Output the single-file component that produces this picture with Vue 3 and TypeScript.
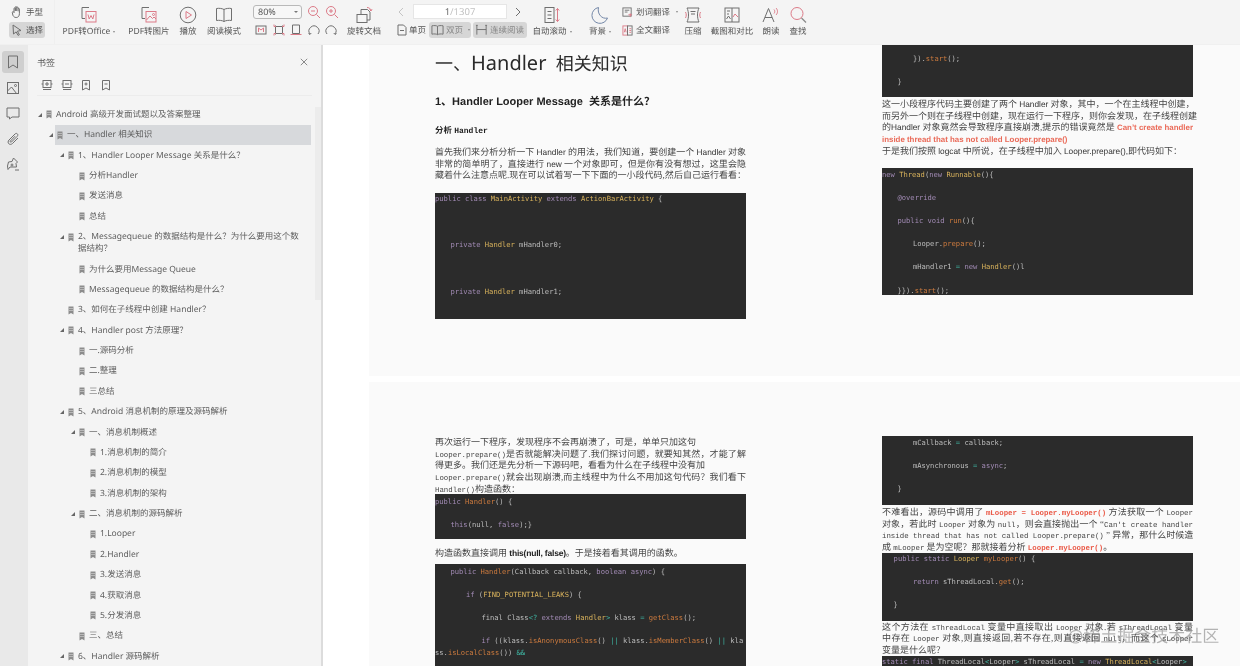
<template>
  <div class="reader">
    <header class="toolbar">
      <div class="hand-group">
        <div class="mode-row">
          <svg class="ico14" viewBox="0 0 14 14"><path d="M4 7V3.600c0-1 1.300-1 1.300 0V6m0-.5V2.300c0-1 1.400-1 1.400 0V6m0-3.200c0-1 1.400-1 1.400 0V6.300m0-2.200c0-1 1.300-1 1.300 0v4.600c0 2.300-1.200 3.800-3.200 3.800-1.700 0-2.500-.8-3.300-2.200L2.400 7.800c-.5-1 .7-1.700 1.300-.8L4.400 8" class="ln" /></svg>
          <span>手型</span>
        </div>
        <div class="mode-row on">
          <svg class="ico14" viewBox="0 0 14 14"><path d="M3 2l8 5.500-3.600.7 2 3.500-1.300.7-2-3.500L3.500 11z" class="ln" /></svg>
          <span>选择</span>
        </div>
      </div>

      <div class="tool w-office">
        <svg class="ico20" viewBox="0 0 20 20"><path d="M10 2.500H3v11h3" class="ln" /><rect x="7" y="6.500" width="10" height="10.500" class="ln-red" /><path d="M9 9.500l1.200 4.500 1.800-3.500 1.800 3.500L15 9.500" class="ln-red" /></svg>
        <span class="tool-label">PDF转Office<i class="dot"></i></span>
      </div>
      <div class="tool w-image">
        <svg class="ico20" viewBox="0 0 20 20"><path d="M10 2.500H3v11h3" class="ln" /><rect x="7" y="6.500" width="10" height="10.500" class="ln-red" /><path d="M7.500 15l3.500-4 2.500 2.500 1.500-1.500 2 2" class="ln-red" /><circle cx="14.500" cy="9.500" r="1" class="ln-red" /></svg>
        <span class="tool-label">PDF转图片</span>
      </div>
      <div class="tool w-play">
        <svg class="ico20" viewBox="0 0 20 20"><circle cx="10" cy="10" r="7.800" class="ln" /><path d="M8 6.500l5.500 3.500L8 13.500z" class="ln-red" /></svg>
        <span class="tool-label">播放</span>
      </div>
      <div class="tool w-read">
        <svg class="ico20" viewBox="0 0 20 20"><path d="M10 4.500C8.500 3.500 5 3 2.500 3.500v12c2.500-.5 6 0 7.500 1 1.500-1 5-1.500 7.500-1v-12C15 3 11.500 3.500 10 4.500zm0 0v12" class="ln" /></svg>
        <span class="tool-label">阅读模式</span>
      </div>

      <div class="zoom-group">
        <div class="zoom-row">
          <div class="zoom-select">80%<i class="caret"></i></div>
          <svg class="ico14 first" viewBox="0 0 14 14"><circle cx="6" cy="6" r="4.500" class="ln-red" /><path d="M4 6h4M9.500 9.500L13 13" class="ln-red" /></svg>
          <svg class="ico14" viewBox="0 0 14 14"><circle cx="6" cy="6" r="4.500" class="ln-red" /><path d="M4 6h4M6 4v4M9.500 9.500L13 13" class="ln-red" /></svg>
        </div>
        <div class="fit-row">
          <svg class="ico14" viewBox="0 0 14 14"><rect x="2" y="3" width="10" height="8" class="ln" /><path d="M4.500 9V5l2.500 2 2.500-2v4" class="ln-red" /></svg>
          <svg class="ico14" viewBox="0 0 14 14"><path d="M3.500 2.500v9M10.500 2.500v9M2 3.500h10M2 10.500h10" class="ln" /><path d="M2 1.500v2h2M12 1.500v2h-2M2 12.500v-2h2M12 12.500v-2h-2" class="ln-red" /></svg>
          <svg class="ico14" viewBox="0 0 14 14"><path d="M3.500 2h7v8.500h-7z" class="ln" /><path d="M1.500 11.500h11" class="ln-red" /></svg>
          <svg class="ico14" viewBox="0 0 14 14"><path d="M3 11A5 5 0 1 1 11 11" class="ln" /><path d="M1.500 10.500L3 11.500l1.200-1.500" class="ln" /></svg>
          <svg class="ico14" viewBox="0 0 14 14"><path d="M11 11A5 5 0 1 0 3 11" class="ln" /><path d="M12.500 10.500L11 11.500 9.800 10" class="ln" /></svg>
        </div>
      </div>

      <div class="tool w-rotate">
        <svg class="ico20" viewBox="0 0 20 20"><path d="M7 9.500V4.500h6.500l2.500 2.500v8h-3" class="ln" /><rect x="3" y="9.500" width="10" height="8" class="ln" /><path d="M13 2.500c2 0 3.500 1 4 3M15.500 4.500l1.500 1.500 1-1.800" class="ln-red" /></svg>
        <span class="tool-label">旋转文档</span>
      </div>

      <div class="nav-group">
        <div class="nav-row">
          <svg class="chev" viewBox="0 0 10 14"><path d="M7 3L3 7l4 4" class="ln-pale" /></svg>
          <div class="page-input"><b>1</b>/1307</div>
          <svg class="chev" viewBox="0 0 10 14"><path d="M3 3l4 4-4 4" class="ln" /></svg>
        </div>
        <div class="view-row">
          <div class="view-btn single">
            <svg class="ico10" viewBox="0 0 10 12"><path d="M1 1h5.500L9 3.500V11H1zM3 6.500h4" class="ln" /></svg>
            <span>单页</span>
          </div>
          <div class="view-btn on double">
            <svg class="ico13" viewBox="0 0 14 12"><path d="M7 2C6 1.200 3 1 1 1.500v9c2-.5 5-.3 6 .5 1-.8 4-1 6-.5v-9C11 1 8 1.200 7 2zm0 0v9" class="ln" /></svg>
            <span>双页</span><i class="dot"></i>
          </div>
          <div class="view-btn on">
            <svg class="ico13" viewBox="0 0 14 12"><path d="M2 1v10M12 1v10M2 5.500h10M1 1h2M11 1h2" class="ln" /></svg>
            <span>连续阅读</span>
          </div>
        </div>
      </div>

      <div class="tool w-auto">
        <svg class="ico20" viewBox="0 0 20 20"><rect x="3" y="2.500" width="9" height="15" class="ln" /><path d="M5.500 6.500h4M5.500 10h4M5.500 13.500h4" class="ln" /><path d="M15.500 3.500v13M13.800 5.500l1.700-2 1.700 2M13.800 14.500l1.700 2 1.700-2" class="ln-red" /></svg>
        <span class="tool-label">自动滚动<i class="dot"></i></span>
      </div>
      <div class="tool w-theme">
        <svg class="ico20" viewBox="0 0 20 20"><path d="M8.500 2.500a8 8 0 1 0 9 10.500c-5.500 1.500-10.500-4-9-10.500z" class="ln-blue" /></svg>
        <span class="tool-label">背景<i class="dot"></i></span>
      </div>
      <div class="translate-group">
        <div class="translate-row">
          <svg class="ico11" viewBox="0 0 12 12"><rect x="1" y="1" width="9" height="9" class="ln" /><path d="M3 3.500h5M3 5.500h3" class="ln" /><path d="M7 8.500h4M9 7v4" class="ln-red" /></svg>
          <span>划词翻译</span><i class="dot"></i>
        </div>
        <div class="translate-row">
          <svg class="ico11" viewBox="0 0 12 12"><rect x="1" y="1" width="5" height="10" class="ln-red" /><rect x="6" y="1" width="5" height="10" class="ln" /><path d="M2.500 8l1-4 1 4M8 4h2M8 6h2M8 8h2" class="ln-red" /></svg>
          <span>全文翻译</span>
        </div>
      </div>
      <div class="tool w-small">
        <svg class="ico20" viewBox="0 0 20 20"><path d="M4 3h12c-2 4-2 10 0 14H4c2-4 2-10 0-14zM7.500 6.500h5M8 9h4" class="ln" /><path d="M2.500 7c1 2 1 4 0 6M17.500 7c-1 2-1 4 0 6" class="ln-red" /></svg>
        <span class="tool-label">压缩</span>
      </div>
      <div class="tool w-shot">
        <svg class="ico20" viewBox="0 0 20 20"><rect x="3" y="3" width="14" height="14" class="ln" /><path d="M10 3v14" class="ln" /><path d="M5 6h3M5 9h2M4.500 14l2-3 2 3" class="ln" /><path d="M11 12l2-3 3 3" class="ln-red" /></svg>
        <span class="tool-label">截图和对比</span>
      </div>
      <div class="tool w-small">
        <svg class="ico20" viewBox="0 0 20 20"><path d="M2 17L7.500 3.500 13 17M4 12.500h7" class="ln" /><path d="M13 4.500c1 1 1 3 0 4M15 3c2 2 2 5 0 7" class="ln-red" /></svg>
        <span class="tool-label">朗读</span>
      </div>
      <div class="tool w-find">
        <svg class="ico20" viewBox="0 0 20 20"><circle cx="9" cy="8.500" r="6" class="ln-red" /><path d="M13.500 13l4.500 4.500" class="ln-gray" /></svg>
        <span class="tool-label">查找</span>
      </div>
    </header>

    <div class="workspace">
      <nav class="rail">
        <div class="rail-btn on">
          <svg class="ico16" viewBox="0 0 16 16"><path d="M3.500 2h9v12L8 11l-4.500 3z" class="ln" /></svg>
        </div>
        <div class="rail-btn">
          <svg class="ico16" viewBox="0 0 16 16"><rect x="2.500" y="2.500" width="11" height="11" class="ln" /><circle cx="10.500" cy="5.500" r="1" class="ln" /><path d="M2.500 11l4-4 5 6.500" class="ln" /></svg>
        </div>
        <div class="rail-btn">
          <svg class="ico16" viewBox="0 0 16 16"><path d="M2 3h12v9H7l-2.500 2v-2H2z" class="ln" /></svg>
        </div>
        <div class="rail-btn">
          <svg class="ico16" viewBox="0 0 16 16"><path d="M13 7l-5.500 5.500c-2.800 2.500-6-.8-3.500-3.500l6-6c1.700-1.600 3.800.5 2.300 2.200L6.500 11c-.8.700-1.800-.2-1.100-1L10 5.200" class="ln" /></svg>
        </div>
        <div class="rail-btn">
          <svg class="ico16" viewBox="0 0 16 16"><path d="M8.500 2l4 4-1.500 1.500.5 3.500H5L3 13.500 2.500 10 3.500 6l3.500-.5z" class="ln" /><circle cx="7" cy="9" r="1" class="ln" /><path d="M10 14h4" class="ln" /></svg>
        </div>
      </nav>

      <aside class="bookmarks">
        <div class="bm-head">
          <span>书签</span>
          <svg class="close" viewBox="0 0 10 10"><path d="M1 1l8 8M9 1L1 9" class="ln" /></svg>
        </div>
        <div class="bm-tools">
          <svg class="ico12" viewBox="0 0 12 12"><rect x="2" y="1.500" width="8" height="7" class="ln" /><path d="M4 5h4M6 3v4M.5 5H2M10 5h1.500M2 10.500h8" class="ln" /></svg>
          <svg class="ico12" viewBox="0 0 12 12"><rect x="2" y="1.500" width="8" height="7" class="ln" /><path d="M4 5h4M.5 5H2M10 5h1.500M2 10.500h8" class="ln" /></svg>
          <svg class="ico12" viewBox="0 0 12 12"><path d="M2.500 1.500h7v9.500L6 9l-3.500 2zM4.500 5h3M6 3.500v3" class="ln" /></svg>
          <svg class="ico12" viewBox="0 0 12 12"><path d="M2.500 1.500h7v9.500L6 9l-3.500 2zM4.500 5h3" class="ln" /></svg>
        </div>
        <div class="bm-tree">
          <div
            v-for="(row, i) in bookmarks"
            :key="i"
            class="bm-row"
            :style="{ paddingLeft: row.level * 11 + 'px' }"
          >
            <span class="bm-arrow"><i v-if="row.open"></i></span>
            <div class="bm-body" :class="{ active: row.active }">
              <svg class="bm-flag" viewBox="0 0 6 9"><path d="M.5.500h5v8L3 7 .5 8.500z" /><path d="M1 2.500h4M1 4.500h4" class="flag-cut" /></svg>
              <span class="bm-text">{{ row.label }}</span>
            </div>
          </div>
        </div>
        <div class="bm-scroll"></div>
      </aside>

      <main class="viewer">
        <section v-for="(spread, s) in spreads" :key="s" class="spread" :class="'spread-' + s">
          <div v-for="(col, c) in spread" :key="c" class="column">
            <template v-for="(block, b) in col" :key="b">
              <pre
                v-if="block.kind === 'code'"
                class="code"
                :style="{ marginTop: block.top + 'px', height: block.height + 'px', paddingTop: (block.pad || 0) + 'px' }"
              ><div v-for="(line, l) in block.lines" :key="l" class="code-line" :style="{ paddingLeft: indent(line) + 'px' }"><span v-for="(seg, g) in parse(line.trimStart())" :key="g" :class="'t-' + seg.kind">{{ seg.text }}</span></div></pre>
              <div v-else :class="block.kind" :style="{ marginTop: block.top + 'px' }">
                <div
                  v-for="(line, l) in block.lines"
                  :key="l"
                  class="doc-line"
                  :class="{ just: line.endsWith('>>') }"
                ><span v-for="(seg, g) in parse(line.replace('>>', ''))" :key="g" :class="'t-' + seg.kind">{{ seg.text }}</span></div>
              </div>
            </template>
          </div>
        </section>
      </main>
    </div>

    <div class="watermark">@稀土掘金技术社区</div>
  </div>
</template>

<script setup lang="ts">
interface Bookmark {
  level: number
  label: string
  open?: boolean
  active?: boolean
}

interface Block {
  kind: 'h1' | 'h2' | 'h3' | 'text' | 'code'
  top: number
  lines: string[]
  height?: number
  pad?: number
}

const bookmarks: Bookmark[] = [
  { level: 0, label: 'Android 高级开发面试题以及答案整理', open: true },
  { level: 1, label: '一、Handler 相关知识', open: true, active: true },
  { level: 2, label: '1、Handler Looper Message 关系是什么？', open: true },
  { level: 3, label: '分析Handler' },
  { level: 3, label: '发送消息' },
  { level: 3, label: '总结' },
  { level: 2, label: '2、Messagequeue 的数据结构是什么？为什么要用这个数\n据结构？', open: true },
  { level: 3, label: '为什么要用Message Queue' },
  { level: 3, label: 'Messagequeue 的数据结构是什么？' },
  { level: 2, label: '3、如何在子线程中创建 Handler？' },
  { level: 2, label: '4、Handler post 方法原理？', open: true },
  { level: 3, label: '一.源码分析' },
  { level: 3, label: '二.整理' },
  { level: 3, label: '三总结' },
  { level: 2, label: '5、Android 消息机制的原理及源码解析', open: true },
  { level: 3, label: '一、消息机制概述', open: true },
  { level: 4, label: '1.消息机制的简介' },
  { level: 4, label: '2.消息机制的模型' },
  { level: 4, label: '3.消息机制的架构' },
  { level: 3, label: '二、消息机制的源码解析', open: true },
  { level: 4, label: '1.Looper' },
  { level: 4, label: '2.Handler' },
  { level: 4, label: '3.发送消息' },
  { level: 4, label: '4.获取消息' },
  { level: 4, label: '5.分发消息' },
  { level: 3, label: '三、总结' },
  { level: 2, label: '6、Handler 源码解析', open: true },
]

// [k|..] keyword, [c|..] class, [o|..] method, [p|..] operator
// [s|..] sans latin, [m|..] mono latin, [r|..] red sans, [q|..] red mono, [b|..] bold, [l|..] big latin
const spreads: Block[][][] = [
  [
    [
      { kind: 'h1', top: 4, lines: ['一、[l|Handler]  相关知识'] },
      { kind: 'h2', top: 17, lines: ['1、Handler Looper Message  关系是什么？'] },
      { kind: 'h3', top: 14, lines: ['分析 [m|Handler]'] },
      {
        kind: 'text',
        top: 10,
        lines: [
          '首先我们来分析分析一下 [s|Handler] 的用法，我们知道，要创建一个 [s|Handler] 对象>>',
          '非常的简单明了，直接进行 [s|new] 一个对象即可，但是你有没有想过，这里会隐>>',
          '藏着什么注意点呢.现在可以试着写一下下面的一小段代码,然后自己运行看看：>>',
        ],
      },
      {
        kind: 'code',
        top: 11.700,
        height: 126,
        lines: [
          '[k|public class] [c|MainActivity] [k|extends] [c|ActionBarActivity] {',
          '',
          '',
          '',
          '    [k|private] [c|Handler] mHandler0;',
          '',
          '',
          '',
          '    [k|private] [c|Handler] mHandler1;',
        ],
      },
    ],
    [
      {
        kind: 'code',
        top: 0,
        height: 52,
        pad: 8,
        lines: ['        }).[o|start]();', '', '    }'],
      },
      {
        kind: 'text',
        top: 1,
        lines: [
          '这一小段程序代码主要创建了两个 [s|Handler] 对象，其中，一个在主线程中创建，>>',
          '而另外一个则在子线程中创建，现在运行一下程序，则你会发现，在子线程创建>>',
          '的[s|Handler] 对象竟然会导致程序直接崩溃,提示的错误竟然是 [r|Can’t create handler]>>',
          '[r|inside thread that has not called Looper.prepare()]',
          '于是我们按照 [s|logcat] 中所说，在子线程中加入 [s|Looper.prepare(),]即代码如下：',
        ],
      },
      {
        kind: 'code',
        top: 11.300,
        height: 127,
        pad: 1,
        lines: [
          '[k|new] [c|Thread]([k|new] [c|Runnable](){',
          '',
          '    [k|@override]',
          '',
          '    [k|public void] [o|run](){',
          '',
          '        Looper.[o|prepare]();',
          '',
          '        mHandler1 [p|=] [k|new] [c|Handler]()l',
          '',
          '    }}).[o|start]();',
        ],
      },
    ],
  ],
  [
    [
      {
        kind: 'text',
        top: 54,
        lines: [
          '再次运行一下程序，发现程序不会再崩溃了，可是，单单只加这句',
          '[m|Looper.prepare()]是否就能解决问题了.我们探讨问题，就要知其然，才能了解>>',
          '得更多。我们还是先分析一下源码吧，看看为什么在子线程中没有加',
          '[m|Looper.prepare()]就会出现崩溃,而主线程中为什么不用加这句代码？我们看下>>',
          '[m|Handler()]构造函数：',
        ],
      },
      {
        kind: 'code',
        top: 0,
        height: 45,
        pad: 1.500,
        lines: ['[k|public] [o|Handler]() {', '', '    [k|this](null, [k|false]);}'],
      },
      { kind: 'text', top: 7.500, lines: ['构造函数直接调用 [b|this(null, false)]。于是接着看其调用的函数。'] },
      {
        kind: 'code',
        top: 5,
        height: 110,
        pad: 2,
        lines: [
          '    [k|public] [o|Handler](Callback callback, [k|boolean async]) {',
          '',
          '        [k|if] ([c|FIND_POTENTIAL_LEAKS]) {',
          '',
          '            final Class[p|<?] [k|extends] [c|Handler][p|>] klass [p|=] [o|getClass]();',
          '',
          '            [k|if] ((klass.[o|isAnonymousClass]() [p|||] klass.[o|isMemberClass]() [p|||] kla',
          'ss.[o|isLocalClass]()) [p|&&]',
        ],
      },
    ],
    [
      {
        kind: 'code',
        top: 54,
        height: 69,
        pad: 1,
        lines: [
          '        mCallback [p|=] callback;',
          '',
          '        mAsynchronous [p|=] [k|async];',
          '',
          '    }',
        ],
      },
      {
        kind: 'text',
        top: 1,
        lines: [
          '不难看出，源码中调用了 [q|mLooper = Looper.myLooper()] 方法获取一个 [m|Looper]>>',
          '对象，若此时 [m|Looper] 对象为 [m|null]，则会直接抛出一个 “[m|Can\'t create handler]>>',
          '[m|inside thread that has not called Looper.prepare()] ” 异常，那什么时候造>>',
          '成 [m|mLooper] 是为空呢？那就接着分析 [q|Looper.myLooper()]。',
        ],
      },
      {
        kind: 'code',
        top: 0,
        height: 68,
        lines: [
          '   [k|public static] [c|Looper] [o|myLooper]() {',
          '',
          '        [k|return] sThreadLocal.[o|get]();',
          '',
          '   }',
        ],
      },
      {
        kind: 'text',
        top: 0,
        lines: [
          '这个方法在 [m|sThreadLocal] 变量中直接取出 [m|Looper] 对象.若 [m|sThreadLocal] 变量>>',
          '中存在 [m|Looper] 对象,则直接返回,若不存在,则直接返回 [m|null]，而这个 [m|sLooper]>>',
          '变量是什么呢？',
        ],
      },
      {
        kind: 'code',
        top: 0,
        height: 30,
        lines: ['[k|static final] ThreadLocal[p|<]Looper[p|>] sThreadLocal [p|=] [k|new] [c|ThreadLocal][p|<]Looper[p|>]'],
      },
    ],
  ],
]

interface Segment {
  kind: string
  text: string
}

const parse = (line: string): Segment[] => {
  const segs: Segment[] = []
  let last = 0
  for (const m of line.matchAll(/\[(\w)\|([^\]]*)\]/g)) {
    if (m.index > last) segs.push({ kind: 'x', text: line.slice(last, m.index) })
    segs.push({ kind: m[1], text: m[2] })
    last = m.index + m[0].length
  }
  if (last < line.length) segs.push({ kind: 'x', text: line.slice(last) })
  if (!segs.length) segs.push({ kind: 'x', text: ' ' })
  return segs
}

// the source code was indented a little narrower than one mono character
const indent = (line: string) => (line.length - line.trimStart().length) * 3.87
</script>

<style>
html,
body {
  margin: 0;
  background: #fff;
  overflow: hidden;
}
</style>

<style scoped>
.reader {
  position: relative;
  width: 1240px;
  height: 666px;
  overflow: hidden;
  background: #fff;
  filter: blur(0.45px);
  font-family: "Noto Sans", "Noto Sans CJK SC", sans-serif;
  font-size: 8.5px;
  color: #555;
  text-rendering: geometricPrecision;
}

/* icon strokes */
.ln,
.ln-red,
.ln-pale,
.ln-blue,
.ln-gray {
  fill: none;
  stroke: #6f6f6f;
  stroke-width: 1;
}
.ln-red {
  stroke: #dc7b88;
}
.ln-pale {
  stroke: #c4c4c4;
}
.ln-blue {
  stroke: #7488a8;
}
.ln-gray {
  stroke: #888;
  stroke-width: 1.2;
}
.ico10 {
  width: 10px;
  height: 12px;
  flex: none;
}
.ico11 {
  width: 11px;
  height: 11px;
  flex: none;
}
.ico12 {
  width: 12px;
  height: 12px;
  flex: none;
}
.ico13 {
  width: 13px;
  height: 12px;
  flex: none;
}
.ico14 {
  width: 14px;
  height: 14px;
  flex: none;
}
.ico16 {
  width: 16px;
  height: 16px;
}
.ico20 {
  width: 20px;
  height: 20px;
  flex: none;
}
.dot {
  display: inline-block;
  width: 0;
  height: 0;
  margin-left: 3px;
  border: 1.5px solid transparent;
  border-top: 2px solid #888;
  vertical-align: 0;
}

/* toolbar */
.toolbar {
  display: flex;
  height: 45px;
  box-sizing: border-box;
  background: #f4f4f4;
  border-bottom: 1px solid #f0f0f0;
}
.hand-group {
  width: 55px;
  flex: none;
  box-sizing: border-box;
  padding: 4px 0 0 9px;
  border-right: 1px solid #efefef;
}
.mode-row {
  display: flex;
  align-items: center;
  gap: 2px;
  width: 36px;
  height: 16px;
  padding-left: 1px;
  box-sizing: border-box;
  margin-bottom: 2px;
}
.mode-row.on {
  background: #d6d6d6;
  border-radius: 3px;
}
.tool {
  display: flex;
  flex-direction: column;
  align-items: center;
  flex: none;
  padding-top: 5px;
  box-sizing: border-box;
}
.tool-label {
  margin-top: 0.5px;
  line-height: 11px;
  white-space: nowrap;
}
.w-office {
  width: 68px;
}
.w-image {
  width: 52px;
}
.w-play {
  width: 26px;
}
.w-read {
  width: 46px;
}
.w-rotate {
  width: 38px;
}
.w-auto {
  width: 44px;
}
.w-theme {
  width: 44px;
  margin-left: 4px;
}
.w-small {
  width: 22px;
}
.w-shot {
  width: 56px;
}
.w-find {
  width: 32px;
}
.zoom-group {
  width: 98px;
  flex: none;
  box-sizing: border-box;
  padding: 5px 0 0 7px;
}
.zoom-row {
  display: flex;
  align-items: center;
  gap: 4px;
  height: 14px;
  margin-left: -1px;
}
.zoom-select {
  position: relative;
  width: 49px;
  height: 14px;
  box-sizing: border-box;
  padding-left: 4px;
  border: 1px solid #b9b9b9;
  border-radius: 3px;
  background: #f7f7f7;
  line-height: 12px;
  font-size: 9px;
}
.caret {
  position: absolute;
  right: 3px;
  top: 5px;
  border: 2px solid transparent;
  border-top: 2px solid #777;
}
.first {
  margin-left: 1px;
}
.fit-row {
  display: flex;
  gap: 3.5px;
  margin-top: 4px;
}
.nav-group {
  width: 147px;
  flex: none;
  box-sizing: border-box;
  padding: 4px 0 0 13px;
}
.nav-row {
  display: flex;
  align-items: center;
}
.chev {
  width: 10px;
  height: 14px;
}
.page-input {
  width: 94px;
  height: 15px;
  margin: 0 6px 0 7px;
  box-sizing: border-box;
  border: 1px solid #e6e6e6;
  background: #fff;
  text-align: center;
  font-size: 9.500px;
  line-height: 13px;
  color: #c2c2c2;
}
.page-input b {
  font-weight: 400;
  color: #666;
}
.view-row {
  display: flex;
  align-items: center;
  gap: 2px;
  margin-top: 3px;
}
.view-btn {
  display: flex;
  align-items: center;
  gap: 2px;
  height: 16px;
  padding: 0 3px 0 2px;
  white-space: nowrap;
  color: #888;
}
.view-btn.on {
  background: #d6d6d6;
  border-radius: 3px;
}
.view-btn.single {
  width: 31px;
  padding: 0 0 0 1px;
  box-sizing: border-box;
  color: #555;
}
.view-btn.double {
  width: 42px;
  box-sizing: border-box;
}
.translate-group {
  width: 60px;
  flex: none;
  padding-top: 5px;
}
.translate-row {
  display: flex;
  align-items: center;
  gap: 3px;
  height: 14px;
  margin-bottom: 4px;
  white-space: nowrap;
}

/* left side */
.workspace {
  display: flex;
  height: 621px;
}
.rail {
  width: 28px;
  flex: none;
  box-sizing: border-box;
  padding: 6px 0 0 2px;
  background: #e9e9e9;
}
.rail-btn {
  display: flex;
  align-items: center;
  justify-content: center;
  width: 22px;
  height: 22px;
  margin-bottom: 3.500px;
  border-radius: 3px;
}
.rail-btn.on {
  background: #cfcfcf;
}
.bookmarks {
  position: relative;
  width: 295px;
  flex: none;
  box-sizing: border-box;
  padding-left: 9px;
  background: #f4f4f4;
  border-right: 2px solid #dcdcdc;
}
.bm-head {
  display: flex;
  align-items: center;
  justify-content: space-between;
  width: 271px;
  height: 34px;
  box-sizing: border-box;
  font-size: 9px;
}
.close {
  width: 8px;
  height: 8px;
}
.bm-tools {
  display: flex;
  gap: 7.500px;
  width: 275px;
  height: 17px;
  box-sizing: border-box;
  padding-left: 4px;
  border-bottom: 1px solid #ececec;
}
.bm-tree {
  width: 274px;
  padding-top: 8.700px;
}
.bm-row {
  display: flex;
  align-items: flex-start;
}
.bm-arrow {
  width: 7px;
  flex: none;
  height: 20px;
  position: relative;
}
.bm-arrow i {
  position: absolute;
  left: 1px;
  top: 8px;
  width: 0;
  height: 0;
  border-style: solid;
  border-width: 0 0 4px 4px;
  border-color: transparent transparent #666 transparent;
}
.bm-body {
  display: flex;
  flex: 1;
  align-items: flex-start;
  gap: 4px;
  padding: 4.200px 8px 4.200px 2px;
  min-width: 0;
}
.bm-body.active {
  background: #d7d9dc;
}
.bm-flag {
  width: 6px;
  height: 9px;
  flex: none;
  margin-top: 1.500px;
  fill: #8c8c8c;
}
.flag-cut {
  stroke: #e4e4e4;
  stroke-width: 0.5;
}
.bm-text {
  line-height: 12px;
  white-space: pre-line;
  color: #5d5d5d;
}
.bm-scroll {
  position: absolute;
  left: 287px;
  top: 62px;
  width: 6px;
  height: 193px;
  background: #ececec;
}

/* document */
.viewer {
  flex: 1;
  min-width: 0;
  overflow: hidden;
  background: #fff;
}
.spread {
  display: grid;
  grid-template-columns: 311px 311px;
  column-gap: 136px;
  margin-left: 46px;
  padding-left: 66px;
  background: #fafafa;
}
.spread-0 {
  height: 331px;
  margin-bottom: 6px;
}
.spread-1 {
  height: 300px;
}
.column {
  min-width: 0;
}
.doc-line {
  height: 11.700px;
  line-height: 13.700px;
  white-space: nowrap;
}
.h1 {
  font-size: 18px;
  color: #2a2a2a;
}
.h1 .doc-line {
  height: 28px;
  line-height: 28px;
  white-space: pre;
}
.t-l {
  font-size: 20px;
}
.h2 {
  font-family: "Liberation Sans", "Noto Sans CJK SC", sans-serif;
  font-size: 11px;
  font-weight: 700;
  color: #222;
}
.h2 .doc-line {
  height: 16px;
  line-height: 17px;
  white-space: pre;
}
.h3 {
  font-size: 8.500px;
  font-weight: 700;
  color: #222;
}
.h3 .doc-line {
  height: 12px;
  line-height: 14px;
  white-space: pre;
}
.h3 .t-m {
  font-size: 8px;
  font-weight: 700;
  color: #222;
}
.text {
  font-family: "Liberation Serif", "Noto Sans CJK SC", serif;
  font-size: 9px;
  color: #454545;
}
.doc-line.just {
  text-align: justify;
  text-align-last: justify;
}
.t-s {
  font-family: "Liberation Sans", sans-serif;
  font-size: 8.300px;
  color: #333;
}
.t-m {
  font-family: "Liberation Mono", monospace;
  font-size: 7.400px;
  color: #454545;
}
.t-r {
  font-family: "Liberation Sans", sans-serif;
  font-size: 7.900px;
  font-weight: 700;
  color: #ea6a58;
}
.t-q {
  font-family: "Liberation Mono", monospace;
  font-size: 7.400px;
  font-weight: 700;
  color: #ea5a48;
}
.t-b {
  font-family: "Liberation Sans", sans-serif;
  font-size: 8.500px;
  font-weight: 700;
  color: #222;
  letter-spacing: -0.2px;
}
.code {
  margin: 0;
  box-sizing: border-box;
  overflow: hidden;
  background: #2b2b2b;
  font-family: "DejaVu Sans Mono", monospace;
  font-size: 7.130px;
  line-height: 11.600px;
  color: #bdbdbd;
}
.code-line {
  height: 11.600px;
}
.code .t-k {
  color: #a28bb5;
}
.code .t-c {
  color: #d8b25c;
}
.code .t-o {
  color: #cc7a3e;
}
.code .t-p {
  color: #3fb8a5;
}
.watermark {
  position: absolute;
  left: 1068px;
  top: 624px;
  font-size: 17px;
  line-height: 24px;
  color: rgba(120, 120, 120, 0.55);
  white-space: nowrap;
  pointer-events: none;
}
</style>
